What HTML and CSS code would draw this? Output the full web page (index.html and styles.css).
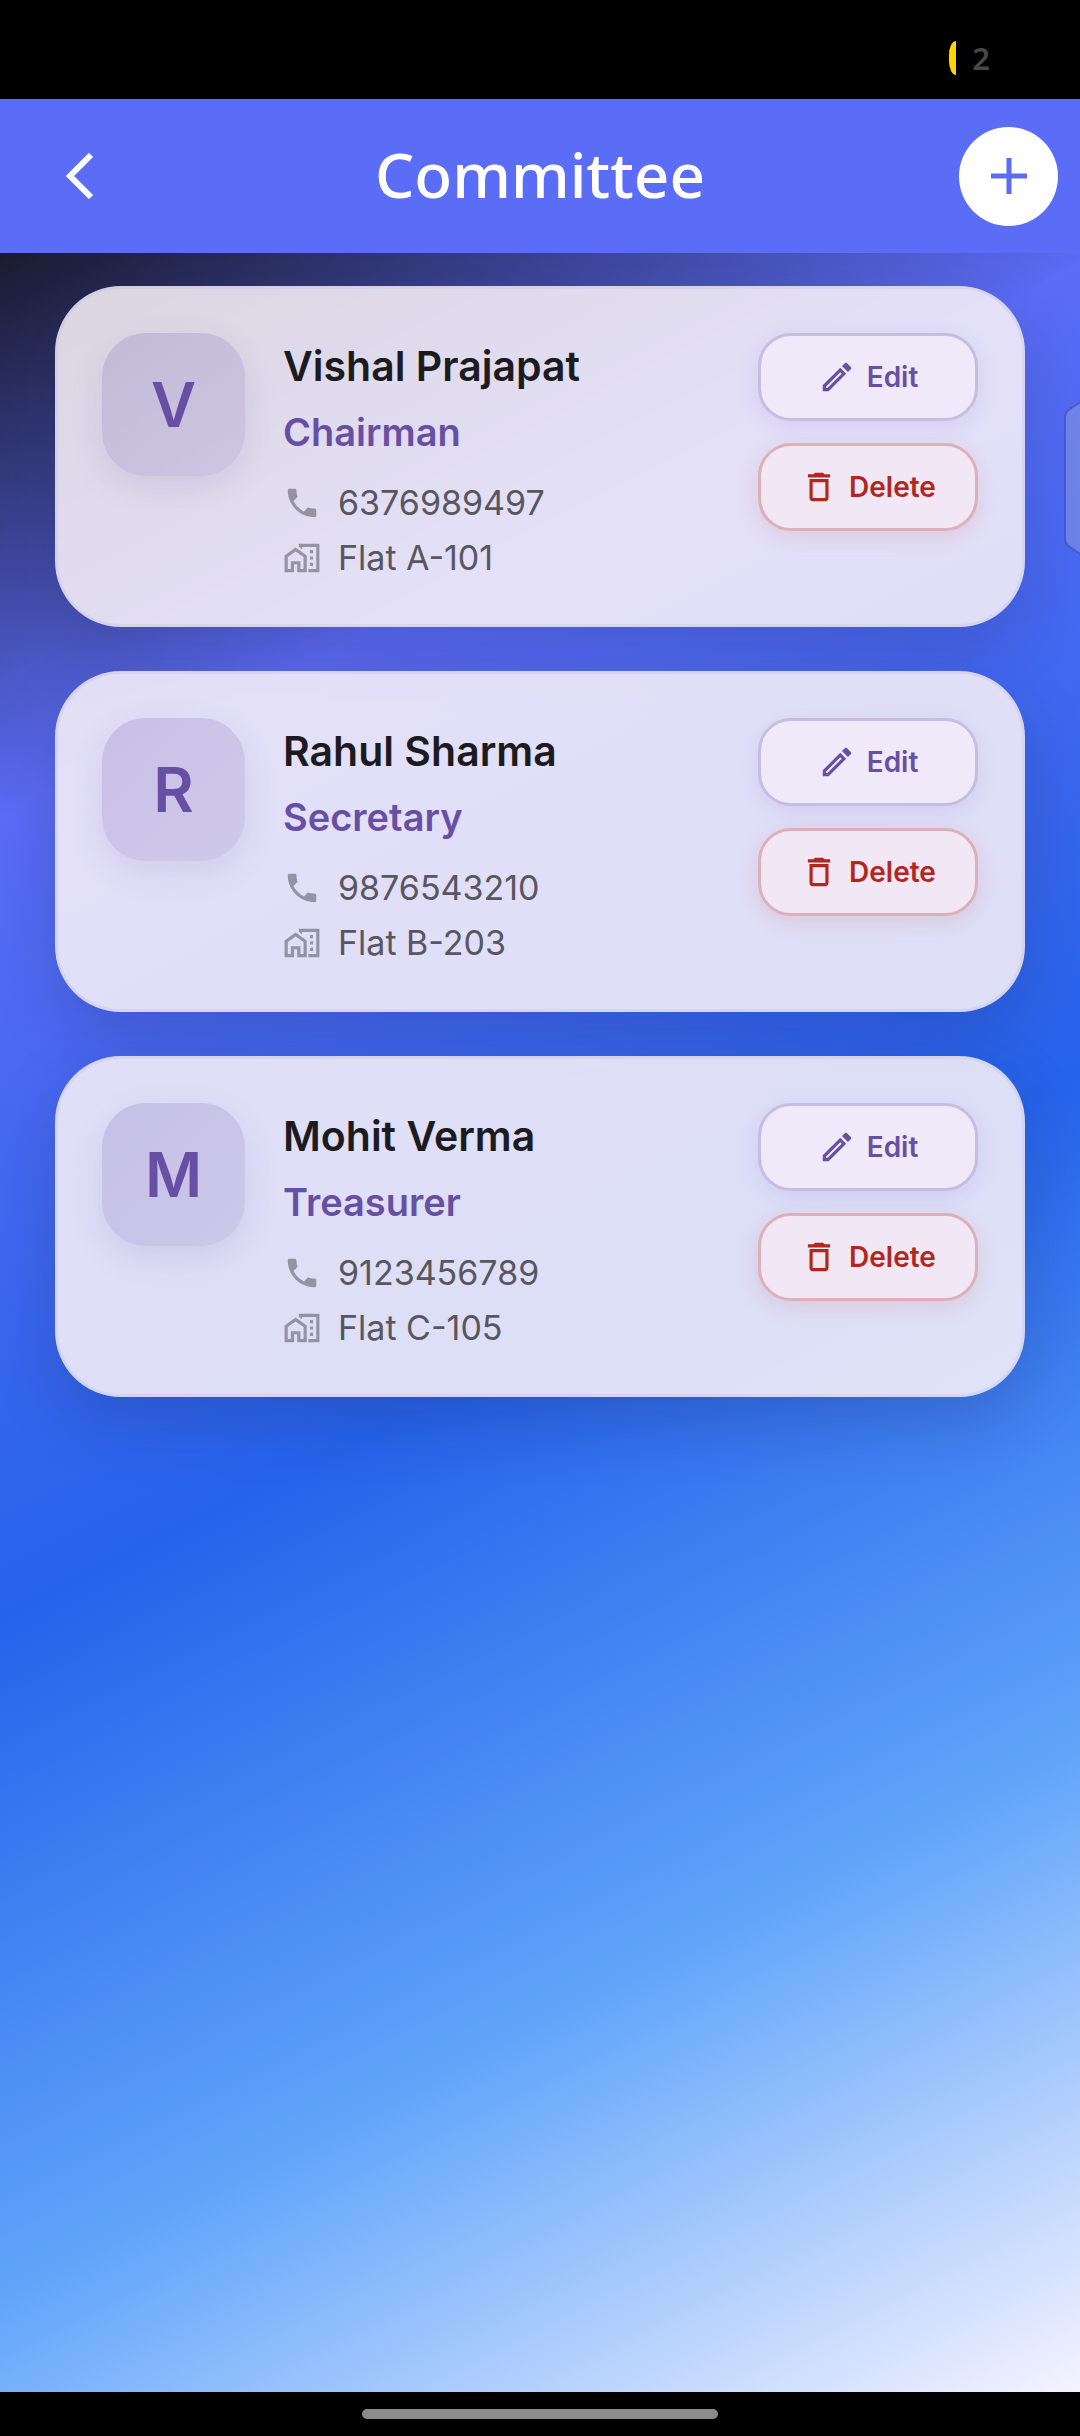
FILE: index.html
```
<!DOCTYPE html>
<html lang="en">
  <head>
    <meta charset="utf-8">
    <meta name="viewport" content="width=device-width, initial-scale=1">
    <title>Committee</title>
    <link rel="stylesheet" href="styles.css">
  </head>
  <body>
    <!-- Shared icons -->
    <svg class="sprite" aria-hidden="true">
      <symbol id="icon-phone" viewBox="0 0 24 24">
        <path d="M6.62 10.79c1.44 2.83 3.76 5.14 6.59 6.59l2.2-2.2c.27-.27.67-.36 1.02-.24 1.12.37 2.33.57 3.57.57.55 0 1 .45 1 1V20c0 .55-.45 1-1 1-9.39 0-17-7.61-17-17 0-.55.45-1 1-1h3.5c.55 0 1 .45 1 1 0 1.25.2 2.45.57 3.57.11.35.03.74-.25 1.02l-2.2 2.2z"/>
      </symbol>
      <symbol id="icon-home" viewBox="0 0 24 24">
        <path d="M17 11h2v2h-2zM17 15h2v2h-2zM17 7h2v2h-2z"/>
        <path d="M10 3v1.970l2 1.430V5h9v14h-5v2h7V3z"/>
        <path d="M8 5.370l-7 5V21h6v-5h2v5h6V10.370l-7-5zM13 19h-2v-5H5v5H3v-7.600l5-3.570 5 3.570V19z"/>
      </symbol>
      <symbol id="icon-edit" viewBox="0 0 24 24">
        <path d="M14.060 9.020l.92.92L5.920 19H5v-.92l9.060-9.060M17.660 3c-.25 0-.51.1-.7.290l-1.830 1.830 3.750 3.750 1.830-1.830c.39-.39.39-1.020 0-1.410l-2.340-2.340c-.2-.2-.45-.29-.71-.29zm-3.600 3.190L3 17.250V21h3.750L17.810 9.940l-3.750-3.750z"/>
      </symbol>
      <symbol id="icon-delete" viewBox="0 0 24 24">
        <path d="M6 19c0 1.100.9 2 2 2h8c1.100 0 2-.9 2-2V7H6v12zM8 9h8v10H8V9zm7.500-5l-1-1h-5l-1 1H5v2h14V4z"/>
      </symbol>
    </svg>

    <div class="screen">
      <div class="status-bar">
        <span class="status-chip"></span>
        <span class="status-count">2</span>
      </div>

      <header class="app-bar">
        <button class="back-button" aria-label="Back">
          <svg viewBox="0 0 28 46" width="28" height="46"><path d="M25 2L4 23l21 21"/></svg>
        </button>
        <h1>Committee</h1>
        <button class="add-button" aria-label="Add member">
          <svg viewBox="0 0 36 36" width="36" height="36"><path d="M18 0v36M0 18h36"/></svg>
        </button>
      </header>

      <main class="members">
        <article class="card">
          <div class="avatar">V</div>
          <div class="info">
            <h2>Vishal Prajapat</h2>
            <p class="role">Chairman</p>
            <p class="detail"><svg><use href="#icon-phone"/></svg>6376989497</p>
            <p class="detail"><svg><use href="#icon-home"/></svg>Flat A-101</p>
          </div>
          <div class="actions">
            <button class="action edit"><svg><use href="#icon-edit"/></svg>Edit</button>
            <button class="action delete"><svg><use href="#icon-delete"/></svg>Delete</button>
          </div>
        </article>

        <article class="card">
          <div class="avatar">R</div>
          <div class="info">
            <h2>Rahul Sharma</h2>
            <p class="role">Secretary</p>
            <p class="detail"><svg><use href="#icon-phone"/></svg>9876543210</p>
            <p class="detail"><svg><use href="#icon-home"/></svg>Flat B-203</p>
          </div>
          <div class="actions">
            <button class="action edit"><svg><use href="#icon-edit"/></svg>Edit</button>
            <button class="action delete"><svg><use href="#icon-delete"/></svg>Delete</button>
          </div>
        </article>

        <article class="card">
          <div class="avatar">M</div>
          <div class="info">
            <h2>Mohit Verma</h2>
            <p class="role">Treasurer</p>
            <p class="detail"><svg><use href="#icon-phone"/></svg>9123456789</p>
            <p class="detail"><svg><use href="#icon-home"/></svg>Flat C-105</p>
          </div>
          <div class="actions">
            <button class="action edit"><svg><use href="#icon-edit"/></svg>Edit</button>
            <button class="action delete"><svg><use href="#icon-delete"/></svg>Delete</button>
          </div>
        </article>

        <!-- Edge panel handle, floats over the list -->
        <svg class="edge-handle" viewBox="0 0 16 156" aria-hidden="true">
          <path d="M18 1L6 9Q1 12 1 18V138Q1 144 6 147L18 155"/>
        </svg>
      </main>

      <div class="nav-bar"><span class="nav-pill"></span></div>
    </div>
  </body>
</html>
```
FILE: styles.css
```
:root {
  --primary: #5b6cf6;
  --purple: #6750a4;
  --red: #b3261e;
  --text: #1c1b1f;
  --text-secondary: #58565f;
  --icon: #9592a3;
}

* {
  box-sizing: border-box;
}

body {
  margin: 0;
  font-family: Inter, "Noto Sans", sans-serif;
  background: #000;
  color: var(--text);
}

h1,
h2,
p {
  margin: 0;
}

button {
  display: flex;
  align-items: center;
  justify-content: center;
  padding: 0;
  border: none;
  font-family: inherit;
  cursor: pointer;
}

.sprite {
  display: none;
}

.screen {
  display: flex;
  flex-direction: column;
  min-height: 100vh;
}

/* System bars */
.status-bar {
  display: flex;
  align-items: center;
  justify-content: flex-end;
  gap: 16px;
  height: 99px;
  padding: 16px 90px 0 0;
}

.status-chip {
  width: 7px;
  height: 34px;
  border-radius: 7px 0 0 7px / 14px 0 0 14px;
  background: #fdd20a;
}

.status-count {
  font-family: "Noto Sans", sans-serif;
  font-size: 31px;
  font-weight: 600;
  color: #484848;
}

.nav-bar {
  display: flex;
  justify-content: center;
  height: 44px;
  padding-top: 17px;
}

.nav-pill {
  width: 33%;
  height: 10px;
  border-radius: 5px;
  background: #8c8c8c;
}

/* App bar */
.app-bar {
  display: grid;
  grid-template-columns: 99px 1fr 99px;
  align-items: center;
  height: 154px;
  padding: 0 22px;
  background: var(--primary);
}

.app-bar h1 {
  padding-bottom: 4px;
  font-family: "Noto Sans", sans-serif;
  font-size: 62px;
  font-weight: 500;
  line-height: 72px;
  text-align: center;
  color: #fff;
}

.back-button,
.add-button {
  height: 99px;
  border-radius: 50%;
}

.back-button {
  padding-left: 16px;
  background: none;
}

.add-button {
  background: #fff;
}

.app-bar path {
  fill: none;
  stroke: #fff;
  stroke-width: 6;
}

.app-bar .add-button path {
  stroke: var(--primary);
  stroke-width: 5;
}

/* Member list */
.members {
  position: relative;
  display: flex;
  flex: 1;
  flex-direction: column;
  gap: 44px;
  padding: 33px 55px;
  overflow: hidden;
  background: linear-gradient(153deg, #1a1a2e 0%, #5b6cf6 21%, #2563eb 51%, #60a5fa 76%, #f5f3ff 100%);
}

.card {
  display: flex;
  align-items: flex-start;
  padding: 44px;
  border: 3px solid rgba(190, 190, 225, 0.3);
  border-radius: 66px;
  background: rgba(248, 241, 248, 0.87);
  box-shadow: 0 22px 66px rgba(30, 27, 60, 0.2);
}

.avatar {
  width: 143px;
  height: 143px;
  border-radius: 44px;
  background: linear-gradient(135deg, rgba(103, 80, 164, 0.22), rgba(103, 80, 164, 0.16));
  box-shadow: 0 11px 33px rgba(103, 80, 164, 0.14);
  font-size: 62px;
  font-weight: 600;
  line-height: 143px;
  text-align: center;
  color: var(--purple);
}

.info {
  flex: 1;
  margin-left: 38px;
}

.info h2 {
  font-size: 41px;
  font-weight: 600;
  line-height: 66px;
}

.role {
  margin-bottom: 16px;
  font-size: 38px;
  font-weight: 600;
  line-height: 66px;
  color: var(--purple);
}

.detail {
  display: flex;
  align-items: center;
  gap: 17px;
  font-size: 34px;
  line-height: 44px;
  color: var(--text-secondary);
}

.detail + .detail {
  margin-top: 11px;
}

.detail svg,
.action svg {
  width: 38px;
  height: 38px;
}

.detail svg {
  fill: var(--icon);
}

.actions {
  display: flex;
  flex-direction: column;
  gap: 22px;
  width: 220px;
}

.action {
  gap: 11px;
  height: 88px;
  border: 3px solid;
  border-radius: 33px;
  font-size: 28px;
  font-weight: 600;
}

.action svg {
  fill: currentColor;
}

.edit {
  border-color: #c7bde1;
  background: #f0e9f9;
  box-shadow: 0 6px 22px rgba(103, 80, 200, 0.12);
  color: var(--purple);
}

.delete {
  border-color: #ddb0b8;
  background: #f2e7f5;
  box-shadow: 0 6px 22px rgba(179, 38, 30, 0.12);
  color: var(--red);
}

.edge-handle {
  position: absolute;
  top: 147px;
  right: 0;
  width: 16px;
  height: 156px;
  fill: rgba(160, 170, 215, 0.4);
  stroke: rgba(60, 75, 180, 0.6);
  stroke-width: 2;
}
```
